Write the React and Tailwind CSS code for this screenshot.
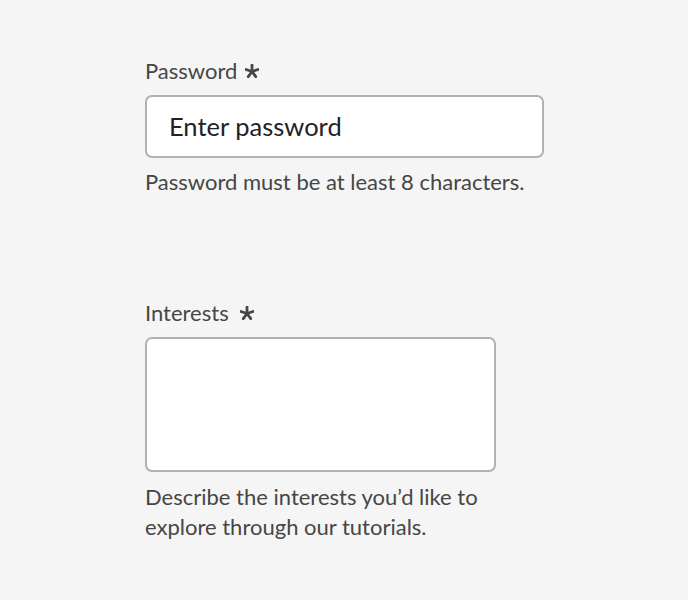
import React from 'react'

const FONT = { fontFamily: 'Lato, "Open Sans", sans-serif' }

function Asterisk() {
  // five-armed required marker
  return (
    <svg width="14" height="14" viewBox="0 0 12 12" className="shrink-0">
      <g stroke="#464646" strokeWidth="2.4" strokeLinecap="round">
        <line x1="6" y1="6.4" x2="6" y2="0.9" />
        <line x1="6" y1="6.4" x2="11.2" y2="4.7" />
        <line x1="6" y1="6.4" x2="9.2" y2="10.8" />
        <line x1="6" y1="6.4" x2="2.8" y2="10.8" />
        <line x1="6" y1="6.4" x2="0.8" y2="4.7" />
      </g>
    </svg>
  )
}

function Label({ children, gap }) {
  return (
    <label className={`flex items-center ${gap} text-[22px] leading-[30px] text-[#464646]`}>
      <span>{children}</span>
      <Asterisk />
    </label>
  )
}

export default function App() {
  return (
    <div className="min-h-[600px] bg-[#f5f5f5] pl-[145px] pt-[56px]" style={FONT}>
      {/* Password field */}
      <div className="flex flex-col w-[399px]">
        <Label gap="gap-[8px]">Password</Label>
        <div className="mt-[9px] h-[63px] rounded-[7px] border-2 border-[#b1b1b1] bg-white px-[22px] flex items-center text-[25.5px] text-[#222222]">
          Enter password
        </div>
        <p className="mt-[9px] text-[22px] leading-[30px] text-[#464646]">
          Password must be at least 8 characters.
        </p>
      </div>

      {/* Interests field */}
      <div className="mt-[101px] flex flex-col w-[351px]">
        <Label gap="gap-[11px]">Interests</Label>
        <textarea
          className="mt-[9px] h-[135px] w-full resize-none rounded-[7px] border-2 border-[#b1b1b1] bg-white outline-none"
          aria-label="Interests"
        />
        <p className="mt-[10px] text-[22px] leading-[30px] text-[#464646]">
          Describe the interests you’d like to explore through our tutorials.
        </p>
      </div>
    </div>
  )
}
